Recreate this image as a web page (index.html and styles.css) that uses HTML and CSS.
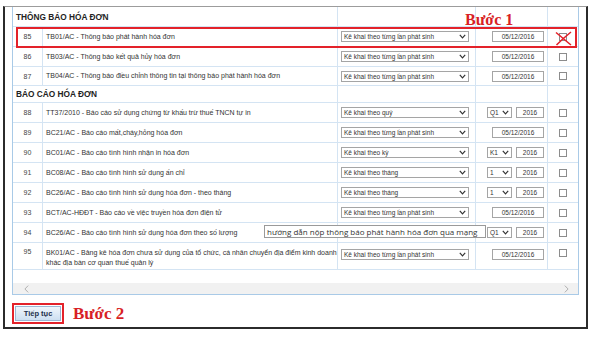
FILE: index.html
```html
<!DOCTYPE html>
<html lang="vi">
<head>
<meta charset="utf-8">
<title>Danh sách tờ khai</title>
<link rel="stylesheet" href="styles.css">
</head>
<body>
<div class="frame">
  <div class="panel">
    <div class="rows">
      <div class="row head h1"><div class="c-title">THÔNG BÁO HÓA ĐƠN</div><div></div><div></div><div></div></div>

      <div class="row"><div class="c-num">85</div><div class="c-name">TB01/AC - Thông báo phát hành hóa đơn</div>
        <div class="c-sel"><div class="sel wide"><span>Kê khai theo từng lần phát sinh</span><svg class="chev" width="7" height="5" viewBox="0 0 7 5"><polyline points="0.8,0.8 3.5,3.8 6.2,0.8"/></svg></div></div>
        <div class="c-date"><div class="inp date">05/12/2016</div></div><div class="c-chk"><span class="chk"></span></div></div>

      <div class="row"><div class="c-num">86</div><div class="c-name">TB03/AC - Thông báo kết quả hủy hóa đơn</div>
        <div class="c-sel"><div class="sel wide"><span>Kê khai theo từng lần phát sinh</span><svg class="chev" width="7" height="5" viewBox="0 0 7 5"><polyline points="0.8,0.8 3.5,3.8 6.2,0.8"/></svg></div></div>
        <div class="c-date"><div class="inp date">05/12/2016</div></div><div class="c-chk"><span class="chk"></span></div></div>

      <div class="row r19"><div class="c-num">87</div><div class="c-name">TB04/AC - Thông báo điều chỉnh thông tin tại thông báo phát hành hóa đơn</div>
        <div class="c-sel"><div class="sel wide"><span>Kê khai theo từng lần phát sinh</span><svg class="chev" width="7" height="5" viewBox="0 0 7 5"><polyline points="0.8,0.8 3.5,3.8 6.2,0.8"/></svg></div></div>
        <div class="c-date"><div class="inp date">05/12/2016</div></div><div class="c-chk"><span class="chk"></span></div></div>

      <div class="row head h2"><div class="c-title">BÁO CÁO HÓA ĐƠN</div><div></div><div></div><div></div></div>

      <div class="row"><div class="c-num">88</div><div class="c-name">TT37/2010 - Báo cáo sử dụng chứng từ khấu trừ thuế TNCN tự in</div>
        <div class="c-sel"><div class="sel wide"><span>Kê khai theo quý</span><svg class="chev" width="7" height="5" viewBox="0 0 7 5"><polyline points="0.8,0.8 3.5,3.8 6.2,0.8"/></svg></div></div>
        <div class="c-date"><div class="sel small"><span>Q1</span><svg class="chev" width="7" height="5" viewBox="0 0 7 5"><polyline points="0.8,0.8 3.5,3.8 6.2,0.8"/></svg></div><div class="inp year">2016</div></div><div class="c-chk"><span class="chk"></span></div></div>

      <div class="row"><div class="c-num">89</div><div class="c-name">BC21/AC - Báo cáo mất,cháy,hỏng hóa đơn</div>
        <div class="c-sel"><div class="sel wide"><span>Kê khai theo từng lần phát sinh</span><svg class="chev" width="7" height="5" viewBox="0 0 7 5"><polyline points="0.8,0.8 3.5,3.8 6.2,0.8"/></svg></div></div>
        <div class="c-date"><div class="inp date">05/12/2016</div></div><div class="c-chk"><span class="chk"></span></div></div>

      <div class="row"><div class="c-num">90</div><div class="c-name">BC01/AC - Báo cáo tình hình nhận in hóa đơn</div>
        <div class="c-sel"><div class="sel wide"><span>Kê khai theo kỳ</span><svg class="chev" width="7" height="5" viewBox="0 0 7 5"><polyline points="0.8,0.8 3.5,3.8 6.2,0.8"/></svg></div></div>
        <div class="c-date"><div class="sel small"><span>K1</span><svg class="chev" width="7" height="5" viewBox="0 0 7 5"><polyline points="0.8,0.8 3.5,3.8 6.2,0.8"/></svg></div><div class="inp year">2016</div></div><div class="c-chk"><span class="chk"></span></div></div>

      <div class="row"><div class="c-num">91</div><div class="c-name">BC08/AC - Báo cáo tình hình sử dụng ấn chỉ</div>
        <div class="c-sel"><div class="sel wide"><span>Kê khai theo tháng</span><svg class="chev" width="7" height="5" viewBox="0 0 7 5"><polyline points="0.8,0.8 3.5,3.8 6.2,0.8"/></svg></div></div>
        <div class="c-date"><div class="sel small"><span>1</span><svg class="chev" width="7" height="5" viewBox="0 0 7 5"><polyline points="0.8,0.8 3.5,3.8 6.2,0.8"/></svg></div><div class="inp year">2016</div></div><div class="c-chk"><span class="chk"></span></div></div>

      <div class="row"><div class="c-num">92</div><div class="c-name">BC26/AC - Báo cáo tình hình sử dụng hóa đơn - theo tháng</div>
        <div class="c-sel"><div class="sel wide"><span>Kê khai theo tháng</span><svg class="chev" width="7" height="5" viewBox="0 0 7 5"><polyline points="0.8,0.8 3.5,3.8 6.2,0.8"/></svg></div></div>
        <div class="c-date"><div class="sel small"><span>1</span><svg class="chev" width="7" height="5" viewBox="0 0 7 5"><polyline points="0.8,0.8 3.5,3.8 6.2,0.8"/></svg></div><div class="inp year">2016</div></div><div class="c-chk"><span class="chk"></span></div></div>

      <div class="row"><div class="c-num">93</div><div class="c-name">BCT/AC-HĐĐT - Báo cáo về việc truyền hóa đơn điện tử</div>
        <div class="c-sel"><div class="sel wide"><span>Kê khai theo từng lần phát sinh</span><svg class="chev" width="7" height="5" viewBox="0 0 7 5"><polyline points="0.8,0.8 3.5,3.8 6.2,0.8"/></svg></div></div>
        <div class="c-date"><div class="inp date">05/12/2016</div></div><div class="c-chk"><span class="chk"></span></div></div>

      <div class="row"><div class="c-num">94</div><div class="c-name">BC26/AC - Báo cáo tình hình sử dụng hóa đơn theo số lượng</div>
        <div class="c-sel"><div class="sel wide"><span></span><svg class="chev" width="7" height="5" viewBox="0 0 7 5"><polyline points="0.8,0.8 3.5,3.8 6.2,0.8"/></svg></div></div>
        <div class="c-date"><div class="sel small"><span>Q1</span><svg class="chev" width="7" height="5" viewBox="0 0 7 5"><polyline points="0.8,0.8 3.5,3.8 6.2,0.8"/></svg></div><div class="inp year">2016</div></div><div class="c-chk"><span class="chk"></span></div></div>

      <div class="row tall"><div class="c-num">95</div><div class="c-name">BK01/AC - Bảng kê hóa đơn chưa sử dụng của tổ chức, cá nhân chuyển địa điểm kinh doanh khác địa bàn cơ quan thuế quản lý</div>
        <div class="c-sel"><div class="sel wide"><span>Kê khai theo từng lần phát sinh</span><svg class="chev" width="7" height="5" viewBox="0 0 7 5"><polyline points="0.8,0.8 3.5,3.8 6.2,0.8"/></svg></div></div>
        <div class="c-date"><div class="inp date">05/12/2016</div></div><div class="c-chk"><span class="chk"></span></div></div>
    </div>
    <div class="hscroll">
      <svg width="5" height="8" viewBox="0 0 5 8"><polyline points="4.2,0.6 0.9,4 4.2,7.4"/></svg>
      <svg width="5" height="8" viewBox="0 0 5 8"><polyline points="0.8,0.6 4.1,4 0.8,7.4"/></svg>
    </div>
  </div>

  <div class="actions">
    <button class="btn" type="button">Tiếp tục</button>
    <span class="step step2">Bước 2</span>
  </div>

  <div class="mark-row"></div>
  <span class="step step1">Bước 1</span>
  <svg class="xmark" width="17" height="15" viewBox="0 0 17 15"><path d="M1 1.5 C6 5.5 11 10 16 14"/><path d="M16 1 C11 5 6 9.5 1.5 14"/></svg>
  <div class="tip">hướng dẫn nộp thông báo phát hành hóa đơn qua mạng</div>
</div>
</body>
</html>
```

FILE: styles.css
```css
body {
  margin: 0;
  background: #ffffff;
  font-family: "Liberation Sans", Arial, sans-serif;
}

.frame {
  position: relative;
  box-sizing: border-box;
  width: 585px;
  height: 323px;
  margin: 6px 0 0 3px;
  border: 2px solid #2b2b2b;
  border-top: 1px solid #9c9c9c;
  padding: 0 7px;
  background: #ffffff;
}

.panel {
  box-sizing: border-box;
  height: 288px;
  border: 1px solid #a9cae7;
  border-top: none;
  display: flex;
  flex-direction: column;
}

.row {
  display: grid;
  grid-template-columns: 30px 295px 138px 72px 30px;
  height: 20px;
  box-sizing: border-box;
  border-bottom: 1px solid #d4e4f3;
}

.row.r19 { height: 19px; }
.row.h2 { height: 17px; }
.row.tall { height: 27px; }

.row > div {
  box-sizing: border-box;
  border-right: 1px solid #d4e4f3;
  display: flex;
  align-items: center;
  min-width: 0;
}

.row > div:last-child { border-right: none; }

.c-title {
  grid-column: span 2;
  padding-left: 3px;
  font-size: 8.3px;
  font-weight: bold;
  color: #222222;
}

.c-num {
  justify-content: center;
  font-size: 7px;
  color: #444444;
}

.c-name {
  padding-left: 3px;
  font-size: 7px;
  color: #333333;
  line-height: 10px;
}

.c-sel { padding-left: 3px; }

.c-date {
  justify-content: flex-end;
  padding-right: 3px;
  gap: 4px;
}

.c-chk { justify-content: center; }

.row.tall > div {
  align-items: flex-start;
  padding-top: 5px;
}

.row.tall .c-sel > div,
.row.tall .c-date > div { margin-top: 1px; }

.row.tall .c-chk .chk { margin-top: 1px; }

.sel {
  box-sizing: border-box;
  height: 11px;
  border: 1px solid #a5a5a5;
  background: #ffffff;
  display: flex;
  align-items: center;
  justify-content: space-between;
  padding: 0 2px 0 2px;
  font-size: 6.5px;
  color: #333333;
  white-space: nowrap;
}

.sel.wide { width: 128px; }
.sel.small { width: 25px; }

.chev {
  fill: none;
  stroke: #333333;
  stroke-width: 1.2;
  flex: none;
}

.inp {
  box-sizing: border-box;
  height: 11px;
  border: 1px solid #a5a5a5;
  background: #ffffff;
  display: flex;
  align-items: center;
  justify-content: center;
  font-size: 6.5px;
  color: #333333;
}

.inp.date { width: 52px; }
.inp.year { width: 28px; }

.chk {
  box-sizing: border-box;
  width: 8px;
  height: 8px;
  border: 1px solid #8c8c8c;
  background: #ffffff;
}

.hscroll {
  margin-top: auto;
  height: 11px;
  background: #f1f1f1;
  display: flex;
  align-items: center;
  justify-content: space-between;
  padding: 0 9px 0 11px;
}

.hscroll svg {
  fill: none;
  stroke: #b0b0b0;
  stroke-width: 1;
}

.actions {
  display: flex;
  align-items: center;
  gap: 12px;
  padding: 8px 0 0 3px;
}

.btn {
  box-sizing: border-box;
  width: 46px;
  height: 15px;
  padding: 0;
  border: 1px solid #9cb8d6;
  background: linear-gradient(#f0f6fc, #cddff1);
  font-family: "Liberation Sans", Arial, sans-serif;
  font-size: 7.5px;
  font-weight: bold;
  color: #1c2f4b;
  outline: 2px solid #e3222a;
  outline-offset: 1px;
}

.step {
  font-family: "Liberation Serif", "Times New Roman", serif;
  font-weight: bold;
  color: #d81f26;
  line-height: 18px;
  white-space: nowrap;
}

.step2 {
  font-size: 17px;
  margin-top: 2px;
}

.step1 {
  position: absolute;
  left: 460px;
  top: 4px;
  font-size: 16px;
}

.mark-row {
  position: absolute;
  left: 11px;
  top: 20px;
  width: 561px;
  height: 21px;
  box-sizing: border-box;
  border: 2px solid #e3222a;
}

.xmark {
  position: absolute;
  left: 550px;
  top: 24px;
  fill: none;
  stroke: #e3222a;
  stroke-width: 1.6;
}

.tip {
  position: absolute;
  left: 259px;
  top: 218px;
  box-sizing: border-box;
  width: 222px;
  height: 13px;
  padding: 0 2px;
  border: 1px solid #9a9a9a;
  background: #ffffff;
  font-family: "Open Sans", "Noto Sans", sans-serif;
  font-size: 8px;
  line-height: 11px;
  color: #333333;
  white-space: nowrap;
}
```
